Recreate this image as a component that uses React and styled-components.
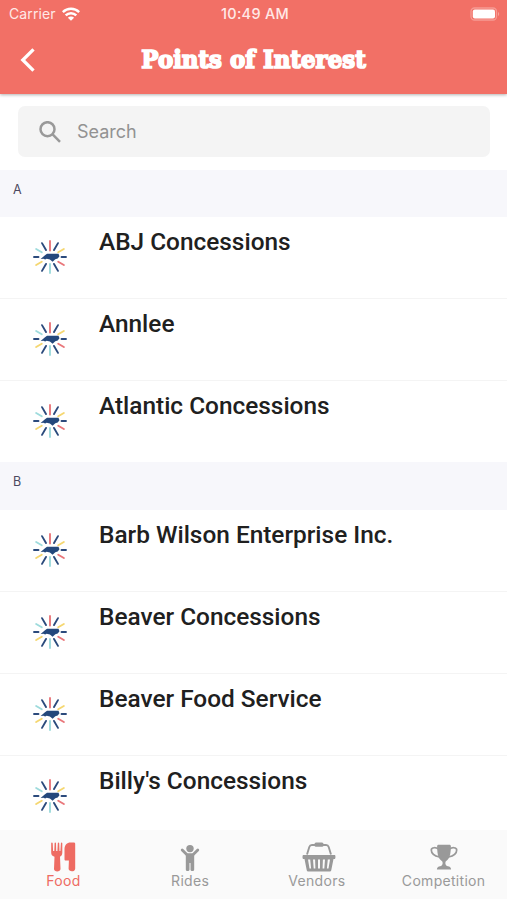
import React, { useState } from 'react';
import styled, { createGlobalStyle } from 'styled-components';

const SECTIONS = [
  { letter: 'A', items: ['ABJ Concessions', 'Annlee', 'Atlantic Concessions'] },
  {
    letter: 'B',
    items: [
      'Barb Wilson Enterprise Inc.',
      'Beaver Concessions',
      'Beaver Food Service',
      "Billy's Concessions",
    ],
  },
];

// clockwise from the top
const RAYS = [
  { color: '#e9777b', start: 10.5 },
  { color: '#2b4a7c', start: 9 },
  { color: '#f5d771', start: 7.5 },
  { color: '#2b4a7c', start: 5.5 },
  { color: '#e9777b', start: 7.5 },
  { color: '#2b4a7c', start: 9 },
  { color: '#9edbdc', start: 10 },
  { color: '#2b4a7c', start: 9 },
  { color: '#f5d771', start: 7.5 },
  { color: '#2b4a7c', start: 5.5 },
  { color: '#9edbdc', start: 7.5 },
  { color: '#2b4a7c', start: 9 },
];

const Burst = () => (
  <svg width="34" height="34" viewBox="0 0 34 34">
    {RAYS.map(({ color, start }, i) => (
      <line
        key={i}
        x1="17"
        y1={start}
        x2="17"
        y2="1"
        stroke={color}
        strokeWidth="1.9"
        strokeLinecap="round"
        transform={`rotate(${i * 30} 17 17)`}
      />
    ))}
    <path
      d="M7.600 19 12 15.300 14 13.800h11.500l1 2.500-1.800 2.100-2.400.8-2.700 2.500-2.700-2.300-3.200-.6-1.600.6-1.600-.6Z"
      fill="#24487c"
    />
  </svg>
);

const FoodIcon = () => (
  <svg width="26" height="30" viewBox="0 0 26 30" fill="currentColor">
    <path d="M1.2 1.2c0-1 1.4-1 1.5 0l.4 7.8h1.2l.3-7.8c0-1 1.4-1 1.4 0l.2 7.8h1.2l.4-7.8c0-1 1.4-1 1.4 0L9.500 9h.9l.5-7.8c.1-1 1.400-1 1.400 0v9.300c0 2.400-.8 3.400-2.300 4.300l.5 12.200c0 3.300-6.600 3.300-6.500 0l.5-12.200C2 13.900 1.200 12.900 1.200 10.500Z" />
    <path d="M14.500 7.500C14.500 3 17 .6 20.500.6h3.200c1 0 1.500.5 1.500 1.500v24.700c0 3.400-6.700 3.400-6.600 0l.3-8.300h-3.200c-.8 0-1.200-.4-1.200-1.200Z" />
  </svg>
);

const RidesIcon = () => (
  <svg width="20" height="30" viewBox="0 0 20 30">
    <circle cx="10" cy="6.600" r="3.700" fill="currentColor" />
    <path
      d="m2.200 8 4.800 4.800h6L17.800 8"
      fill="none"
      stroke="currentColor"
      strokeWidth="2.800"
      strokeLinecap="round"
      strokeLinejoin="round"
    />
    <path
      d="M5.800 11.500h8.400v16c0 2-3.700 2-3.700 0V21h-1v6.500c0 2-3.700 2-3.700 0Z"
      fill="currentColor"
    />
  </svg>
);

const BasketIcon = () => (
  <svg width="38" height="30" viewBox="-4 0 38 30">
    <path
      d="M5 12.500 7.300 5c.5-1.500 1-2 2.600-2h14.200c1.600 0 2.100.5 2.600 2L29 12.500"
      fill="none"
      stroke="currentColor"
      strokeWidth="1.900"
    />
    <rect x="12.500" y=".6" width="9" height="4.200" rx="1.500" fill="currentColor" />
    <path
      fill="currentColor"
      fillRule="evenodd"
      d="M1.200 13h31.600c.9 0 .9 3.900 0 3.900H31.500L29.300 28c-.2 1-.8 1.600-2 1.600H6.700c-1.200 0-1.800-.6-2-1.600L2.500 16.900H1.200c-.9 0-.9-3.900 0-3.900Z
      M6 17.500l1.500 9h1.600l-.9-9Z M11 17.500l.7 9h1.700l-.3-9Z M16 17.500v9h2v-9Z M20.900 17.500l-.3 9h1.700l.7-9Z M25.800 17.500l-.9 9h1.600l1.500-9Z"
    />
  </svg>
);

const TrophyIcon = () => (
  <svg width="30" height="30" viewBox="0 0 30 30">
    <path
      d="M9 7C7.500 5.300 2.300 5 2.300 8c0 3.500 3.500 6 8.200 7M21 7c1.500-1.700 6.700-2 6.700 1 0 3.500-3.500 6-8.200 7"
      fill="none"
      stroke="currentColor"
      strokeWidth="1.700"
    />
    <path
      d="M9.700 2.800h10.600c1 0 1.700.7 1.600 1.600-.2 6-.7 10.800-3.300 13.400-1 1-2 1.400-2.200 2.700-.2 1.900.4 3.200 2.400 3.700 2 .3 3.300 1 3.300 3.400H7.900c0-2.400 1.300-3.100 3.300-3.400 2-.5 2.600-1.800 2.400-3.700-.2-1.300-1.200-1.700-2.200-2.700C8.800 15.200 8.300 10.400 8.100 4.400c-.1-.9.6-1.600 1.600-1.600Z"
      fill="currentColor"
    />
  </svg>
);

const TABS = [
  { label: 'Food', icon: <FoodIcon /> },
  { label: 'Rides', icon: <RidesIcon /> },
  { label: 'Vendors', icon: <BasketIcon /> },
  { label: 'Competition', icon: <TrophyIcon /> },
];

const App = () => {
  const [tab, setTab] = useState('Food');

  return (
    <Screen>
      <GlobalStyle />
      <Header>
        <StatusBar>
          <Carrier>
            Carrier
            <svg width="18" height="14" viewBox="0 0 18 14">
              <g fill="none" stroke="currentColor" strokeWidth="2.500">
                <path d="M.8 5.100a11.600 11.600 0 0 1 16.400 0" />
                <path d="M3.700 8.400a7.500 7.500 0 0 1 10.600 0" />
              </g>
              <path d="M9 13.800 5.900 10.700a4.400 4.400 0 0 1 6.200 0Z" fill="currentColor" />
            </svg>
          </Carrier>
          <Clock>10:49 AM</Clock>
          <Battery>
            <svg width="31" height="14" viewBox="0 0 31 14">
              <rect
                x="1"
                y="1"
                width="25.500"
                height="12"
                rx="3.500"
                fill="none"
                stroke="#fff"
                strokeOpacity=".3"
                strokeWidth="1.300"
              />
              <rect x="2.800" y="2.400" width="22.200" height="9.200" rx="2" fill="#fff" />
              <path d="M28 5v4c1.600-.8 1.600-3.200 0-4Z" fill="#fff" fillOpacity=".35" />
            </svg>
          </Battery>
        </StatusBar>
        <NavBar>
          <BackButton aria-label="Back">
            <svg width="16" height="26" viewBox="0 0 16 26">
              <path
                d="M13.500 2.300 2.800 13l10.700 10.700"
                fill="none"
                stroke="currentColor"
                strokeWidth="3.300"
              />
            </svg>
          </BackButton>
          <Title>Points of Interest</Title>
          <span />
        </NavBar>
      </Header>
      <SearchArea>
        <SearchBox>
          <svg width="22" height="22" viewBox="0 0 22 22">
            <g fill="none" stroke="#999" strokeWidth="2.500">
              <circle cx="8.500" cy="8.200" r="7" />
              <path d="m13.400 13.200 7.600 7.600" />
            </g>
          </svg>
          <SearchInput placeholder="Search" />
        </SearchBox>
      </SearchArea>
      <List>
        {SECTIONS.map(({ letter, items }) => (
          <section key={letter}>
            <SectionHeader>{letter}</SectionHeader>
            {items.map(name => (
              <Row key={name}>
                <Thumb>
                  <Burst />
                </Thumb>
                <Name>{name}</Name>
              </Row>
            ))}
          </section>
        ))}
      </List>
      <TabBar>
        {TABS.map(({ label, icon }) => (
          <Tab key={label} $active={tab === label} onClick={() => setTab(label)}>
            {icon}
            <TabLabel>{label}</TabLabel>
          </Tab>
        ))}
      </TabBar>
    </Screen>
  );
};

const GlobalStyle = createGlobalStyle`
  * {
    box-sizing: border-box;
  }

  body {
    margin: 0;
    background-color: #fff;
  }
`;

const Screen = styled.div`
  display: flex;
  flex-direction: column;
  width: 507px;
  height: 900px;
  overflow: hidden;
  background-color: #fff;
  font-family: Inter, 'Liberation Sans', sans-serif;
`;

const Header = styled.header`
  flex: none;
  height: 94px;
  background-color: #f27066;
  color: #fff;
  box-shadow: 0 1px 3px rgba(0, 0, 0, 0.3);
`;

const StatusBar = styled.div`
  display: grid;
  grid-template-columns: 1fr auto 1fr;
  align-items: center;
  height: 27px;
  padding: 0 6px 0 9px;
  font-size: 14px;
  color: #ffe9e7;
`;

const Carrier = styled.div`
  display: flex;
  align-items: center;
  gap: 6px;
  letter-spacing: 0.1px;

  svg {
    color: #fff;
  }
`;

const Clock = styled.div`
  font-size: 14.500px;
  font-weight: 500;
  letter-spacing: 0.25px;
`;

const Battery = styled.div`
  display: flex;
  justify-content: flex-end;
`;

const NavBar = styled.div`
  display: grid;
  grid-template-columns: 60px 1fr 60px;
  align-items: center;
  height: 66px;
`;

const BackButton = styled.button`
  display: flex;
  padding: 0 0 0 20px;
  border: none;
  background-color: transparent;
  color: #fff;
`;

const Title = styled.h1`
  margin: 0;
  font-family: 'DejaVu Serif', serif;
  font-size: 24.500px;
  font-weight: bold;
  line-height: 32px;
  text-align: center;
  white-space: nowrap;
  transform: scaleX(0.935);
  -webkit-text-stroke: 1.700px #fff;
`;

const SearchArea = styled.div`
  flex: none;
  height: 76px;
  padding: 12px 17px 0 18px;
`;

const SearchBox = styled.label`
  display: flex;
  align-items: center;
  gap: 16px;
  height: 51px;
  padding-left: 21px;
  border-radius: 7px;
  background-color: #f4f4f4;
`;

const SearchInput = styled.input`
  flex: 1;
  min-width: 0;
  padding: 0 0 1px;
  border: none;
  outline: none;
  background-color: transparent;
  font-family: inherit;
  font-size: 18px;

  &::placeholder {
    color: #929292;
    opacity: 1;
  }
`;

const List = styled.main`
  flex: 1;
  min-height: 0;
  overflow: hidden;
`;

const SectionHeader = styled.div`
  height: 48px;
  padding: 12px 13px;
  background-color: #f7f7fb;
  color: #4c4960;
  font-size: 12.500px;
  line-height: 15px;

  section:first-child > & {
    height: 47px;
  }
`;

const Row = styled.div`
  display: flex;
  height: 82px;
  border-bottom: 1px solid #f4f4f4;

  &:last-child {
    height: 81px;
    border-bottom: none;
  }
`;

const Thumb = styled.div`
  display: flex;
  width: 99px;
  padding: 23px 0 0 33px;
`;

const Name = styled.div`
  padding-top: 10px;
  color: #202020;
  font-family: Roboto, sans-serif;
  font-size: 24.400px;
  font-weight: 500;
  line-height: 30px;
  white-space: nowrap;
`;

const TabBar = styled.nav`
  flex: none;
  display: grid;
  grid-template-columns: repeat(4, 1fr);
  height: 70px;
  border-bottom: 1px solid #fff;
  background-color: #fafafa;
`;

const Tab = styled.button`
  display: flex;
  flex-direction: column;
  align-items: center;
  padding: 12px 0 0;
  border: none;
  background-color: transparent;
  color: ${props => (props.$active ? '#ee6b62' : '#999')};
  font-family: inherit;
`;

const TabLabel = styled.span`
  font-size: 14px;
  line-height: 17px;
  letter-spacing: 0.3px;
`;

export default App;
